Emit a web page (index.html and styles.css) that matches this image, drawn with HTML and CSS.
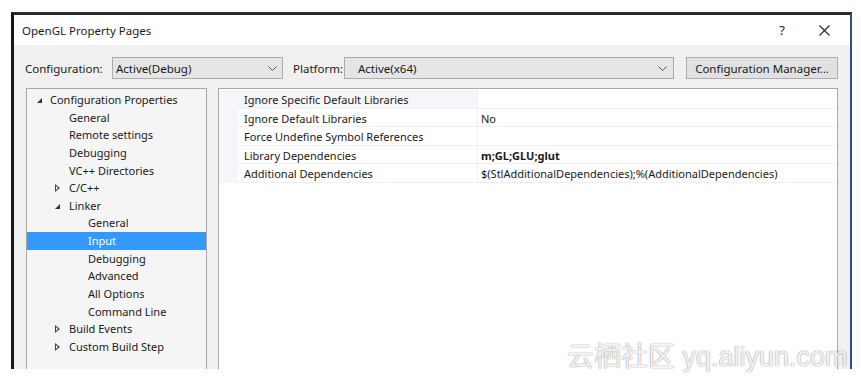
FILE: index.html
```html
<!DOCTYPE html>
<html lang="en">
<head>
	<meta charset="utf-8">
	<title>OpenGL Property Pages</title>
	<link rel="stylesheet" href="styles.css">
</head>
<body>

<div class="window">
	<div class="titlebar">
		<span class="title">OpenGL Property Pages</span>
		<span class="help">?</span>
		<svg class="close" width="11" height="11" viewBox="0 0 11 11"><path d="M0.5 0.5 L10.5 10.5 M10.5 0.5 L0.5 10.5" stroke="#222" stroke-width="1.1" fill="none"/></svg>
	</div>

	<div class="dialog">
		<div class="config-row">
			<span class="label label-config">Configuration:</span>
			<div class="select select-config">
				<span>Active(Debug)</span>
				<svg class="chevron" width="9" height="5" viewBox="0 0 9 5"><path d="M0.5 0.5 L4.5 4.5 L8.5 0.5" stroke="#555" fill="none"/></svg>
			</div>
			<span class="label label-platform">Platform:</span>
			<div class="select select-platform">
				<span>Active(x64)</span>
				<svg class="chevron" width="9" height="5" viewBox="0 0 9 5"><path d="M0.5 0.5 L4.5 4.5 L8.5 0.5" stroke="#555" fill="none"/></svg>
			</div>
			<div class="button">Configuration Manager...</div>
		</div>

		<div class="panes">
			<ul class="tree">
				<li class="lvl1"><i class="open"></i>Configuration Properties</li>
				<li class="lvl2">General</li>
				<li class="lvl2">Remote settings</li>
				<li class="lvl2">Debugging</li>
				<li class="lvl2">VC++ Directories</li>
				<li class="lvl2"><i class="closed"></i>C/C++</li>
				<li class="lvl2"><i class="open"></i>Linker</li>
				<li class="lvl3">General</li>
				<li class="lvl3 selected">Input</li>
				<li class="lvl3">Debugging</li>
				<li class="lvl3">Advanced</li>
				<li class="lvl3">All Options</li>
				<li class="lvl3">Command Line</li>
				<li class="lvl2"><i class="closed"></i>Build Events</li>
				<li class="lvl2"><i class="closed"></i>Custom Build Step</li>
			</ul>

			<div class="grid">
				<div class="row first">
					<div class="name">Ignore Specific Default Libraries</div>
					<div class="value"></div>
				</div>
				<div class="row">
					<div class="name">Ignore Default Libraries</div>
					<div class="value">No</div>
				</div>
				<div class="row">
					<div class="name">Force Undefine Symbol References</div>
					<div class="value"></div>
				</div>
				<div class="row">
					<div class="name">Library Dependencies</div>
					<div class="value bold">m;GL;GLU;glut</div>
				</div>
				<div class="row">
					<div class="name">Additional Dependencies</div>
					<div class="value">$(StlAdditionalDependencies);%(AdditionalDependencies)</div>
				</div>
			</div>
		</div>
	</div>
</div>

<div class="watermark">云栖社区 yq.aliyun.com</div>

</body>
</html>
```

FILE: styles.css
```css
body {
	margin: 0;
	background: #fff;
	font-family: "Noto Sans", "Open Sans", sans-serif;
	font-size: 11px;
	color: #1a1a1a;
}

.window {
	margin: 12px 0 0 11px;
	width: 836px;
	height: 354px;
	border-top: 3px solid #2a2a2a;
	border-left: 3px solid #161616;
	border-right: 2px solid #2b4f80;
	background: #f0f0f0;
	overflow: hidden;
}

.titlebar {
	height: 30px;
	background: #fff;
	display: flex;
	align-items: center;
	padding-left: 8px;
}

.title {
	flex: 1;
	font-size: 11.5px;
}

.help {
	margin-right: 34px;
	font-size: 13px;
}

.close {
	margin-right: 20px;
}

.dialog {
	padding: 12px 0 0 11px;
}

.config-row {
	display: flex;
	align-items: center;
	height: 22px;
}

.label-config {
	width: 87px;
	font-size: 11.5px;
}

.label-platform {
	width: 51px;
	margin-left: 10px;
	font-size: 11.5px;
}

.select {
	box-sizing: border-box;
	height: 22px;
	border: 1px solid #acacac;
	background: #e5e5e5;
	display: flex;
	align-items: center;
	justify-content: space-between;
	font-size: 11.5px;
}

.select-config {
	width: 171px;
	padding: 0 5px 0 3px;
}

.select-platform {
	width: 330px;
	padding: 0 6px 0 13px;
}

.button {
	margin-left: 12px;
	width: 152px;
	height: 22px;
	box-sizing: border-box;
	border: 1px solid #adadad;
	background: #e1e1e1;
	display: flex;
	align-items: center;
	justify-content: center;
	font-size: 11.5px;
}

.panes {
	display: flex;
	gap: 11px;
	margin-top: 9px;
	padding-left: 1px;
}

.tree {
	list-style: none;
	margin: 0;
	padding: 2px 0 0;
	width: 181px;
	height: 300px;
	box-sizing: border-box;
	border: 1px solid #a9a9a9;
	background: #f5f5f5;
}

.tree li {
	height: 17.64px;
	line-height: 18px;
	position: relative;
	white-space: nowrap;
}

.tree .lvl1 { padding-left: 23px; }
.tree .lvl2 { padding-left: 42px; }
.tree .lvl3 { padding-left: 61px; }

.tree .selected {
	background: #3399ff;
	color: #fff;
}

.tree i {
	position: absolute;
}

.tree .lvl1 i { left: 10px; }
.tree .lvl2 i { left: 28px; }

.tree i.open {
	width: 0;
	height: 0;
	top: 7px;
	border-left: 5px solid transparent;
	border-bottom: 5px solid #333;
}

.tree i.closed {
	width: 0;
	height: 0;
	top: 5px;
	border-top: 4px solid transparent;
	border-bottom: 4px solid transparent;
	border-left: 5px solid #444;
}

.tree i.closed::after {
	content: "";
	position: absolute;
	left: -4px;
	top: -2px;
	border-top: 2px solid transparent;
	border-bottom: 2px solid transparent;
	border-left: 2.5px solid #f5f5f5;
}

.grid {
	width: 620px;
	height: 300px;
	box-sizing: border-box;
	border: 1px solid #a9a9a9;
	background: #fff;
	padding-top: 1px;
}

.row {
	display: flex;
	height: 18.6px;
	line-height: 20px;
	box-sizing: border-box;
}

/* category gutter on the left of each row */
.row::before {
	content: "";
	width: 19px;
	flex: none;
	background: #f5f6fa;
}

.name {
	width: 240px;
	padding-left: 6px;
	box-sizing: border-box;
	border-right: 1px solid #f0f0f0;
	border-bottom: 1px solid #f0f0f0;
	white-space: nowrap;
}

.row.first .name {
	background: #f5f6fa;
}

.value {
	flex: 1;
	padding-left: 3px;
	white-space: nowrap;
	border-bottom: 1px solid #f0f0f0;
}

.bold {
	font-weight: bold;
}

.watermark {
	position: absolute;
	left: 567px;
	top: 341px;
	font-family: "Liberation Sans", "Noto Sans CJK SC", sans-serif;
	font-size: 27px;
	line-height: 32px;
	color: rgba(255, 255, 255, 0.92);
	text-shadow: 0 0 1px rgba(0, 0, 0, 0.45), 0 0 2px rgba(0, 0, 0, 0.2);
	white-space: nowrap;
}
```
